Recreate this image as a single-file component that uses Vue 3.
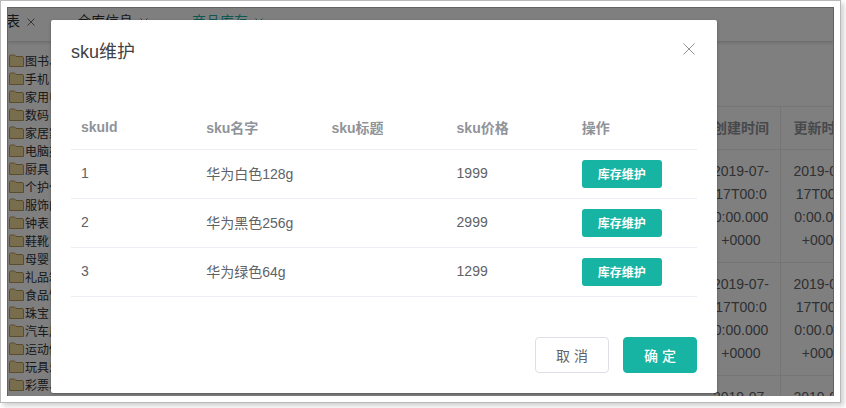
<script setup>
const cats = ['图书、音像','手机','家用电器','数码','家居家装','电脑办公','厨具','个护化妆','服饰内衣','钟表','鞋靴','母婴','礼品箱包','食品饮料','珠宝','汽车用品','运动健康','玩具乐器','彩票、旅行']
const stamp = '2019-07-17T00:00:00.000+0000'
const skus = [
  { id: 1, name: '华为白色128g', price: 1999 },
  { id: 2, name: '华为黑色256g', price: 2999 },
  { id: 3, name: '华为绿色64g', price: 1299 }
]
</script>

<template>
  <div class="shot">
    <div class="frame">
      <div class="page">
        <div class="tabs">
          <span class="tab first">表<svg class="x" width="8" height="8" viewBox="0 0 8 8"><path d="M0.5 0.5 L7.5 7.5 M7.5 0.5 L0.5 7.5" /></svg></span>
          <span class="tab second">仓库信息<svg class="x" width="8" height="8" viewBox="0 0 8 8"><path d="M0.5 0.5 L7.5 7.5 M7.5 0.5 L0.5 7.5" /></svg></span>
          <span class="tab active">商品库存<svg class="x" width="8" height="8" viewBox="0 0 8 8"><path d="M0.5 0.5 L7.5 7.5 M7.5 0.5 L0.5 7.5" /></svg></span>
        </div>
        <div class="body">
          <ul class="tree">
            <li v-for="c in cats" :key="c">
              <svg width="15" height="13" viewBox="0 0 15 13">
                <path d="M0.5 2.5 Q0.5 1 2 1 H5.5 L7 2.5 H13 Q14.5 2.5 14.5 4 V12.5 H0.5 Z" fill="#f1dc9c" stroke="#b39b58" />
              </svg>
              <span>{{ c }}</span>
            </li>
          </ul>
          <div class="bg-table">
            <div class="bg-row head"><div>创建时间</div><div>更新时间</div></div>
            <div class="bg-row" v-for="n in 3" :key="n">
              <div>{{ stamp }}</div><div>{{ stamp }}</div>
            </div>
          </div>
        </div>
      </div>
      <div class="mask"></div>
      <section class="dialog">
        <header class="dialog-head">
          <h2>sku维护</h2>
          <svg class="close" width="12" height="12" viewBox="0 0 12 12">
            <path d="M0.5 0.5 L11.5 11.5 M11.5 0.5 L0.5 11.5" stroke="#909399" stroke-width="1" fill="none" />
          </svg>
        </header>
        <table class="sku">
          <thead>
            <tr><th>skuId</th><th>sku名字</th><th>sku标题</th><th>sku价格</th><th>操作</th></tr>
          </thead>
          <tbody>
            <tr v-for="s in skus" :key="s.id">
              <td>{{ s.id }}</td>
              <td>{{ s.name }}</td>
              <td></td>
              <td>{{ s.price }}</td>
              <td class="act"><button class="stock">库存维护</button></td>
            </tr>
          </tbody>
        </table>
        <footer class="dialog-foot">
          <button class="btn">取 消</button>
          <button class="btn primary">确 定</button>
        </footer>
      </section>
    </div>
  </div>
</template>

<style>
html, body { margin: 0; background: #fff; overflow: hidden; }
</style>

<style scoped>
* { box-sizing: border-box; }
.shot {
  width: 846px; height: 408px; padding: 0 5px 5px 0;
  background: #fff;
  font-family: "Liberation Sans", "Noto Sans CJK SC", sans-serif;
}
.frame {
  position: relative;
  width: 841px; height: 403px;
  border: 1px solid #b9b9b9;
  box-shadow: 3px 3px 5px rgba(0,0,0,.18);
  padding: 6px;
  background: #fff;
}
.page {
  width: 827px; height: 389px; overflow: hidden; background: #fff;
  border: 1px solid #c4c4c4;
  border-bottom: 0;
}
.tabs {
  height: 33px; display: flex; align-items: flex-start; padding-top: 5px;
  font-size: 14px; color: #303133; line-height: 16px;
  box-shadow: 0 2px 3px rgba(0,0,0,.15);
  position: relative;
  background: #fff;
  white-space: nowrap;
}
.tab { display: flex; align-items: center; }
.x { margin-left: 7px; margin-top: 2px; }
.x path { stroke: #6f6f6f; stroke-width: 1; fill: none; }
.first { margin-left: -2px; }
.second { margin-left: 42px; }
.active { margin-left: 44px; color: #17b3a3; }
.active .x path { stroke: #17b3a3; }
.body { display: flex; }
.tree {
  list-style: none; margin: 10px 0 0; padding: 0 0 0 1px; width: 694px; flex: none;
}
.tree li {
  height: 18px; display: flex; align-items: center; gap: 1px;
  font-size: 12px; color: #303133; white-space: nowrap;
}
.bg-table { margin-top: 65px; width: 161px; flex: none; border-top: 1px solid #ebebeb; }
.bg-row {
  display: grid; grid-template-columns: 79px 82px; height: 113px;
  border-bottom: 1px solid #ebebeb;
  font-size: 14px; line-height: 23px; color: #606266; text-align: center;
}
.bg-row div { padding: 10px; border-right: 1px solid #ebebeb; word-break: break-all; }
.bg-row div + div { padding: 10px 12px; }
.bg-row.head { height: 43px; font-weight: 700; color: #909399; }
.bg-row.head div { padding: 10px 0 0; white-space: nowrap; }
.mask { position: absolute; left: 6px; top: 6px; width: 827px; height: 389px; background: rgba(0,0,0,.5); }
.dialog {
  position: absolute; left: 50px; top: 19px;
  width: 666px; height: 373px;
  background: #fff; border-radius: 2px;
  box-shadow: 0 1px 3px rgba(0,0,0,.3);
  padding: 0 20px;
}
.dialog-head { height: 87px; padding-top: 20px; position: relative; }
.dialog-head h2 { margin: 0; font-size: 18px; font-weight: 400; line-height: 24px; color: #3f4144; }
.close { position: absolute; right: 2px; top: 23px; }
.sku { width: 626px; border-collapse: collapse; table-layout: fixed; font-size: 14px; color: #606266; }
.sku th, .sku td { text-align: left; padding: 0 10px; border-bottom: 1px solid #ebeef5; }
.sku th { height: 42px; color: #909399; font-size: 14px; font-weight: 700; padding-bottom: 2px; }
.sku td { height: 49px; padding-bottom: 2px; }
.sku td.act { padding-bottom: 0; }
.stock {
  width: 80px; height: 28px; border: 0; border-radius: 3px; background: #17b3a3;
  color: #fff; font: 700 12px "Liberation Sans", "Noto Sans CJK SC", sans-serif; padding: 0; display: block;
}
.dialog-foot { display: flex; justify-content: flex-end; gap: 14px; margin-top: 40px; }
.btn {
  width: 74px; height: 36px; border: 1px solid #dcdfe6; border-radius: 4px; background: #fff;
  color: #606266; font: 14px "Liberation Sans", "Noto Sans CJK SC", sans-serif; padding: 0;
}
.primary { background: #17b3a3; border-color: #17b3a3; color: #fff; font-weight: 500; }
</style>
